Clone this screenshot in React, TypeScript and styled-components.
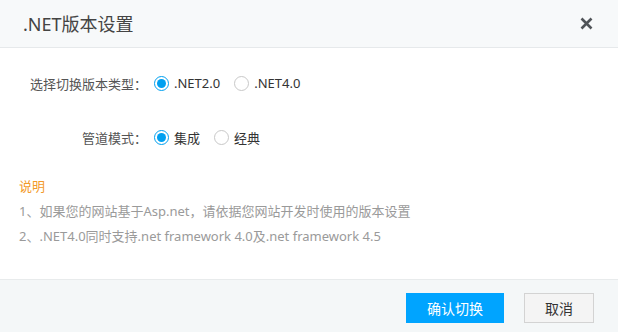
import { useState } from "react";
import styled, { createGlobalStyle } from "styled-components";

const GlobalStyle = createGlobalStyle`
  html, body {
    margin: 0;
    padding: 0;
    background: #ffffff;
  }
  body {
    font-family: "Noto Sans", "Noto Sans CJK SC", sans-serif;
  }
`;

const Dialog = styled.div`
  width: 618px;
  height: 332px;
  display: flex;
  flex-direction: column;
  background: #fff;
  overflow: hidden;
`;

const Header = styled.div`
  height: 47px;
  flex: none;
  display: flex;
  align-items: center;
  justify-content: space-between;
  padding: 0 25px 0 23px;
  background: #f7f9fa;
  border-bottom: 1px solid #e6e9eb;
`;

const Title = styled.h1`
  margin: 0;
  font-size: 18px;
  font-weight: normal;
  color: #444;
  line-height: 24px;
`;

const Close = styled.button`
  width: 13px;
  height: 13px;
  padding: 0;
  border: none;
  background: transparent;
  display: flex;
  cursor: pointer;
`;

const Body = styled.div`
  flex: 1;
  padding: 25px 0 0 19px;
  display: flex;
  flex-direction: column;
`;

const Row = styled.div<{ gap?: number }>`
  display: flex;
  align-items: center;
  height: 20px;
  margin-bottom: ${({ gap }) => gap ?? 0}px;
`;

const Label = styled.span`
  width: 128px;
  text-align: right;
  font-size: 13px;
  color: #555;
  margin-right: 7px;
  white-space: nowrap;
`;

const Options = styled.div`
  display: flex;
  align-items: center;
  gap: 14px;
`;

const Option = styled.label`
  display: flex;
  align-items: center;
  gap: 5px;
  font-size: 13px;
  color: #333;
  cursor: pointer;
`;

const Dot = styled.span<{ checked: boolean }>`
  width: 15px;
  height: 15px;
  box-sizing: border-box;
  border-radius: 50%;
  border: 1px solid ${({ checked }) => (checked ? "#00a0f0" : "#c8c8c8")};
  display: flex;
  align-items: center;
  justify-content: center;
  background: #fff;
  &::after {
    content: "";
    width: 9px;
    height: 9px;
    border-radius: 50%;
    background: ${({ checked }) => (checked ? "#00a0f0" : "transparent")};
  }
`;

const Notes = styled.div`
  margin-top: 27px;
  font-size: 13px;
  line-height: 25px;
  color: #9a9a9a;
`;

const NoteTitle = styled.div`
  color: #f39a2b;
`;

const Footer = styled.div`
  height: 53px;
  flex: none;
  box-sizing: border-box;
  border-top: 1px solid #e8ebec;
  background: #f4f7f8;
  display: flex;
  justify-content: flex-end;
  align-items: flex-start;
  gap: 20px;
  padding: 13px 24px 0 0;
`;

const Button = styled.button<{ primary?: boolean }>`
  height: 30px;
  width: ${({ primary }) => (primary ? 98 : 70)}px;
  box-sizing: border-box;
  border: 1px solid ${({ primary }) => (primary ? "#00a4ff" : "#d3d3d3")};
  background: ${({ primary }) => (primary ? "#00a4ff" : "#f4f4f4")};
  color: ${({ primary }) => (primary ? "#fff" : "#333")};
  font-family: inherit;
  font-size: 14px;
  padding: 0;
  cursor: pointer;
`;

type Choice = { value: string; text: string };

function RadioGroup({
  choices,
  value,
  onChange,
}: {
  choices: Choice[];
  value: string;
  onChange: (v: string) => void;
}) {
  return (
    <Options>
      {choices.map((c) => (
        <Option key={c.value} onClick={() => onChange(c.value)}>
          <Dot checked={c.value === value} />
          {c.text}
        </Option>
      ))}
    </Options>
  );
}

export default function App() {
  const [version, setVersion] = useState("2.0");
  const [mode, setMode] = useState("integrated");
  return (
    <Dialog>
      <GlobalStyle />
      <Header>
        <Title>.NET版本设置</Title>
        <Close aria-label="关闭">
          <svg width="13" height="13" viewBox="0 0 13 13">
            <path
              d="M1.5 1.5 L11.5 11.5 M11.5 1.5 L1.5 11.5"
              stroke="#505458"
              strokeWidth="2.6"
            />
          </svg>
        </Close>
      </Header>
      <Body>
        <Row gap={34}>
          <Label>选择切换版本类型：</Label>
          <RadioGroup
            value={version}
            onChange={setVersion}
            choices={[
              { value: "2.0", text: ".NET2.0" },
              { value: "4.0", text: ".NET4.0" },
            ]}
          />
        </Row>
        <Row>
          <Label>管道模式：</Label>
          <RadioGroup
            value={mode}
            onChange={setMode}
            choices={[
              { value: "integrated", text: "集成" },
              { value: "classic", text: "经典" },
            ]}
          />
        </Row>
        <Notes>
          <NoteTitle>说明</NoteTitle>
          <div>1、如果您的网站基于Asp.net，请依据您网站开发时使用的版本设置</div>
          <div>2、.NET4.0同时支持.net framework 4.0及.net framework 4.5</div>
        </Notes>
      </Body>
      <Footer>
        <Button primary>确认切换</Button>
        <Button>取消</Button>
      </Footer>
    </Dialog>
  );
}
